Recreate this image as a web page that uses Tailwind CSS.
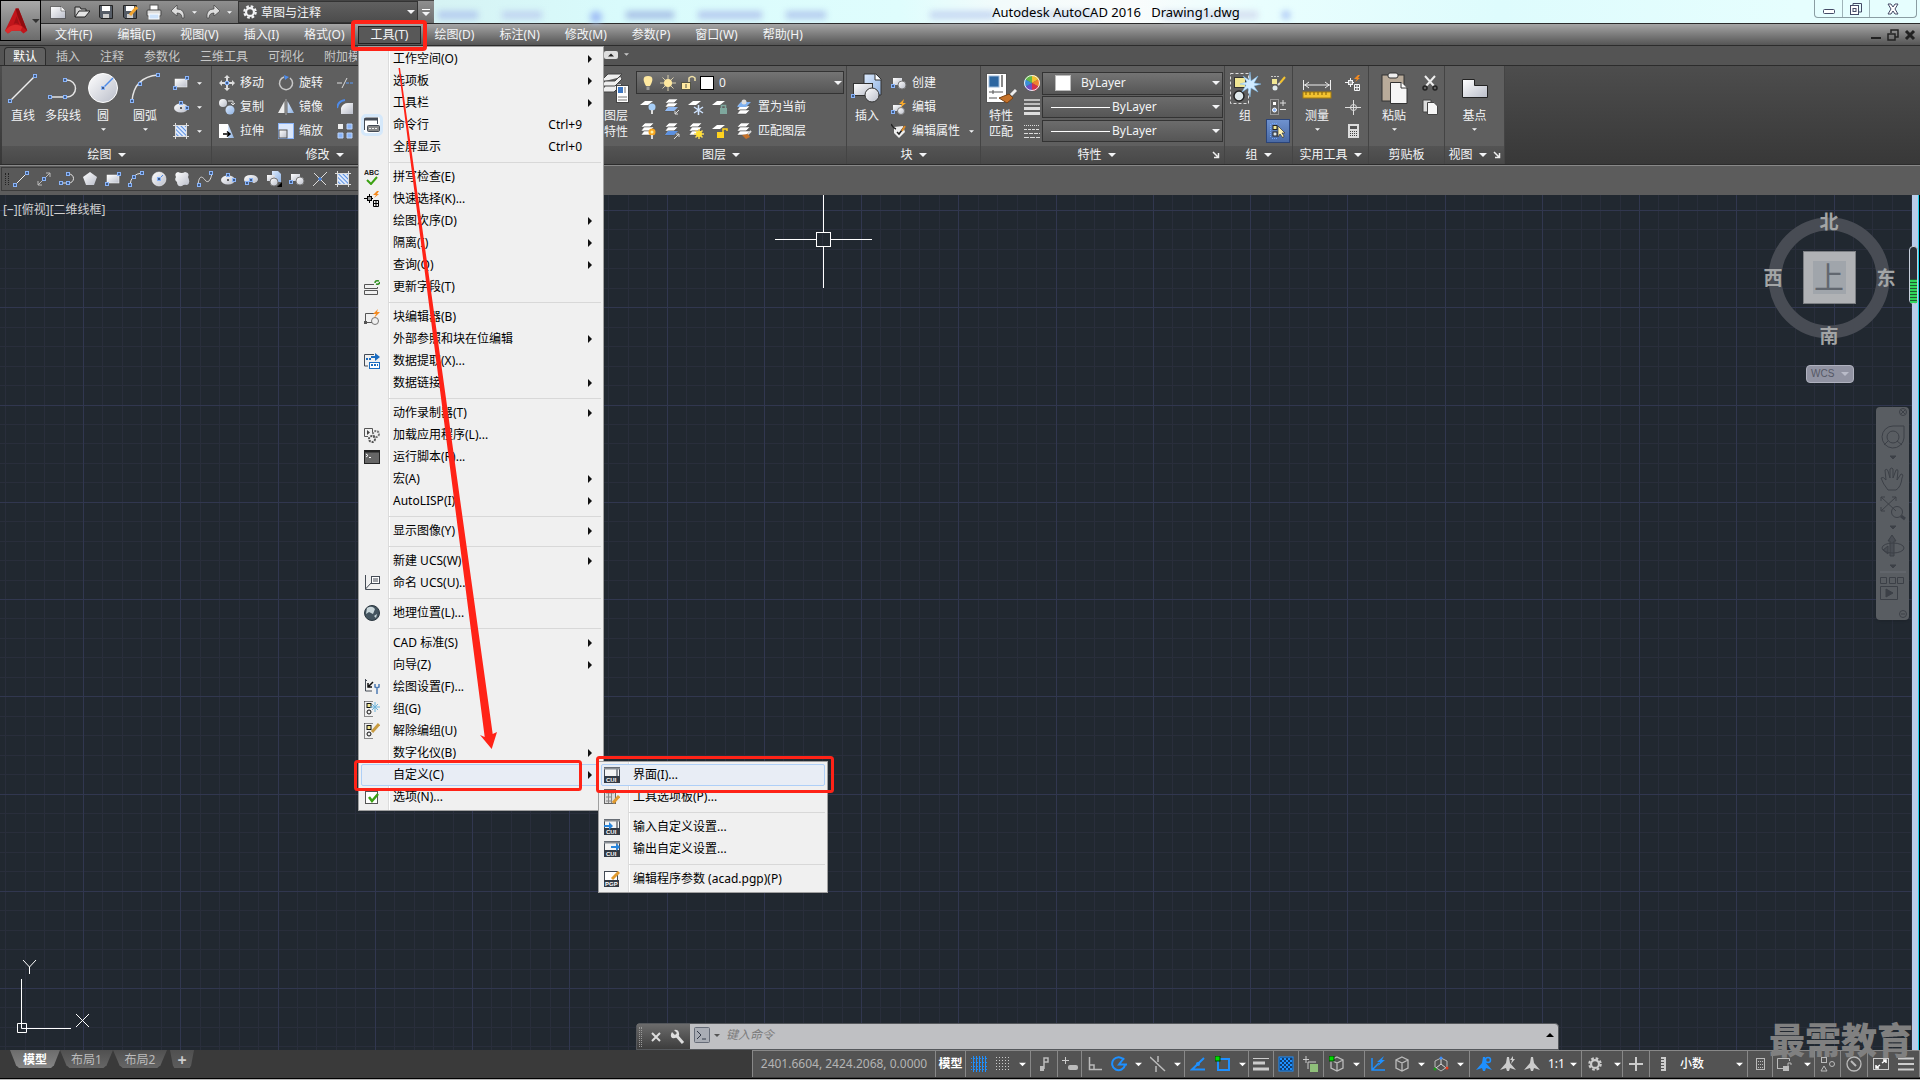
<!DOCTYPE html>
<html lang="zh-CN">
<head>
<meta charset="utf-8">
<title>Autodesk AutoCAD 2016 Drawing1.dwg</title>
<script src="https://cdn.jsdelivr.net/npm/@tailwindcss/browser@4"></script>
</head>
<body class="relative flex h-screen flex-col overflow-hidden bg-[#5c5c5c] font-['Noto_Sans','Noto_Sans_CJK_SC',sans-serif] text-xs leading-4 text-gray-100">

<!-- Icon library -->
<svg class="absolute size-0" aria-hidden="true">
  <defs>
    <linearGradient id="lg" x1="0" y1="0" x2="1" y2="1"><stop offset="0" stop-color="#fff"/><stop offset="1" stop-color="#b9bdc9"/></linearGradient>
    <linearGradient id="bl" x1="0" y1="0" x2="1" y2="1"><stop offset="0" stop-color="#dceafd"/><stop offset="1" stop-color="#8fb2e2"/></linearGradient>
    <pattern id="hatch" width="3" height="3" patternUnits="userSpaceOnUse" patternTransform="rotate(-45)"><rect width="3" height="3" fill="#dfeafc"/><path d="M0 0V3" stroke="#5b90e0" stroke-width="2"/></pattern>
    <g id="nd"><rect x="-1.5" y="-1.5" width="3" height="3" fill="#3e5c8c" stroke="#8ab4f8"/></g>
  </defs>
  <symbol id="caret" viewBox="0 0 8 4"><path d="M0 0H8L4 4Z" fill="currentColor"/></symbol>
  <symbol id="arrow" viewBox="0 0 4 8"><path d="M0 0V8L4 4Z" fill="#111"/></symbol>
  <symbol id="corner" viewBox="0 0 8 8"><path d="M1 1L6 6M6.500 2V6.500H2" stroke="#eee" stroke-width="1.500" fill="none"/></symbol>
  <!-- drawing tools, large -->
  <symbol id="Line" viewBox="0 0 32 32"><path d="M3 29L28 4" stroke="#eee" stroke-width="1.500"/><use href="#nd" x="3" y="29"/><use href="#nd" x="28" y="4"/></symbol>
  <symbol id="Pline" viewBox="0 0 32 32"><path d="M2 25H20a8.500 8.500 0 0 0 0-17H18" stroke="#e4e4e4" stroke-width="1.500" fill="none"/><use href="#nd" x="3" y="25"/><use href="#nd" x="18" y="25"/><use href="#nd" x="18" y="8"/></symbol>
  <symbol id="Circle" viewBox="0 0 32 32"><circle cx="16" cy="16" r="14.500" fill="url(#lg)" stroke="#fff"/><path d="M16 16L26 6" stroke="#4d8ae8" stroke-width="1.500"/><use href="#nd" x="16" y="16"/></symbol>
  <symbol id="Arc" viewBox="0 0 32 32"><path d="M3 29Q5 5 29 3" stroke="#e4e4e4" stroke-width="1.500" fill="none"/><use href="#nd" x="3" y="29"/><use href="#nd" x="11" y="12"/><use href="#nd" x="29" y="3"/></symbol>
  <!-- drawing tools, small -->
  <symbol id="line" viewBox="0 0 16 16"><path d="M2 14L14 2" stroke="#eee"/><use href="#nd" x="2" y="14"/><use href="#nd" x="14" y="2"/></symbol>
  <symbol id="pline" viewBox="0 0 16 16"><path d="M2 12H10a4.500 4.500 0 0 0 0-9H9" stroke="#e4e4e4" fill="none"/><use href="#nd" x="2" y="12"/><use href="#nd" x="9" y="12"/><use href="#nd" x="9" y="3"/></symbol>
  <symbol id="arc" viewBox="0 0 16 16"><path d="M2 14Q3 3 14 2" stroke="#e4e4e4" fill="none"/><use href="#nd" x="2" y="14"/><use href="#nd" x="6" y="6"/><use href="#nd" x="14" y="2"/></symbol>
  <symbol id="circle" viewBox="0 0 16 16"><circle cx="8" cy="8" r="7" fill="url(#lg)" stroke="#fff" stroke-width=".5"/><path d="M8 8L12 4" stroke="#4d8ae8"/><use href="#nd" x="8" y="8"/></symbol>
  <symbol id="rect" viewBox="0 0 16 16"><rect x="2" y="4" width="12" height="8" fill="url(#lg)" stroke="#fff" stroke-width=".5"/><use href="#nd" x="2" y="13"/><use href="#nd" x="14" y="3"/></symbol>
  <symbol id="ellipse" viewBox="0 0 16 16"><ellipse cx="8" cy="9" rx="7" ry="4.500" fill="url(#lg)"/><use href="#nd" x="8" y="4"/><use href="#nd" x="14" y="9"/><path d="M7 9h2M8 8v2" stroke="#333"/></symbol>
  <symbol id="earc" viewBox="0 0 16 16"><path d="M1 9Q1 4 8 4T15 9Q14 12 10 12L8 9L4 12Q1 11 1 9Z" fill="url(#lg)"/><use href="#nd" x="8" y="9"/><use href="#nd" x="4" y="12"/></symbol>
  <symbol id="hatchi" viewBox="0 0 16 16"><rect x="3" y="3" width="10" height="10" fill="url(#hatch)"/><path d="M0 2.500H16M0 13.500H16M2.500 0V16M13.500 0V16" stroke="#ddd"/></symbol>
  <symbol id="poly" viewBox="0 0 16 16"><path d="M8 1L15 6L12 14H4L1 6Z" fill="url(#lg)"/></symbol>
  <symbol id="cloud" viewBox="0 0 16 16"><path d="M4 1Q8 3 11 1Q16 2 14 6Q17 12 13 14Q10 13 8 15Q3 16 3 11Q0 9 2 6Q0 2 4 1Z" fill="url(#lg)"/></symbol>
  <symbol id="spline" viewBox="0 0 16 16"><path d="M1 14C2 4 5 5 8 9S14 9 15 2" stroke="#ddd" fill="none"/><use href="#nd" x="2" y="14"/><use href="#nd" x="14" y="2"/></symbol>
  <symbol id="block" viewBox="0 0 16 16"><rect x="2" y="3" width="9" height="7" fill="url(#lg)"/><circle cx="11" cy="10" r="4" fill="url(#lg)" stroke="#777"/><use href="#nd" x="2" y="11"/></symbol>
  <symbol id="insblk" viewBox="0 0 16 16"><path d="M6 0H12L15 3V11H6Z" fill="url(#bl)"/><rect x="1" y="4" width="8" height="6" fill="url(#lg)"/><circle cx="8" cy="11" r="4" fill="url(#lg)" stroke="#777"/><path d="M16 11V16H11Z"/></symbol>
  <symbol id="ray" viewBox="0 0 16 16"><path d="M1 15L15 1M2 2L14 14" stroke="#ddd"/><path d="M7 9L9 7" stroke="#4d8ae8" stroke-width="3"/></symbol>
  <symbol id="xline" viewBox="0 0 16 16"><path d="M2 14L14 2M10 2H14V6M2 10V14H6" stroke="#bbb" fill="none"/><use href="#nd" x="8" y="8"/></symbol>
  <!-- modify -->
  <symbol id="move" viewBox="0 0 16 16"><path d="M8 0l3 3H9v3H7V3H5ZM8 16l3-3H9v-3H7v3H5ZM0 8l3-3v2h3v2H3v2ZM16 8l-3-3v2h-3v2h3v2Z" fill="#ddd"/><use href="#nd" x="8" y="8"/></symbol>
  <symbol id="copy" viewBox="0 0 16 16"><circle cx="4" cy="4" r="4" fill="url(#lg)"/><circle cx="11" cy="11" r="4.500" fill="url(#bl)"/><path d="M9 2H14V5M12 4L14 6L16 4" stroke="#ddd" fill="none"/></symbol>
  <symbol id="stretch" viewBox="0 0 16 16"><rect x="0" y="1" width="9" height="14" fill="#fff"/><path d="M9 1L15 15H9Z" fill="url(#bl)"/><path d="M4 11H10M8 8.500L11 11L8 13.500" stroke="#000" stroke-width="1.500" fill="none"/></symbol>
  <symbol id="rotate" viewBox="0 0 16 16"><path d="M6 2A6.500 6.500 0 1 0 12 3" stroke="#c8c8c8" stroke-width="1.500" fill="none"/><path d="M6 0L11 2L7 5Z" fill="#4d8ae8"/></symbol>
  <symbol id="mirror" viewBox="0 0 16 16"><path d="M6.500 2V14H0Z" fill="#eee"/><path d="M9.500 2V14H16Z" fill="url(#bl)"/><path d="M8 0V16" stroke="#aaa"/></symbol>
  <symbol id="scale" viewBox="0 0 16 16"><rect x=".5" y=".5" width="15" height="15" fill="#dbe7fb" stroke="#8ab4f8"/><rect x="1" y="7" width="8" height="8" fill="url(#lg)" stroke="#555"/></symbol>
  <symbol id="trim" viewBox="0 0 16 16"><path d="M0 8H5M5 13L10 3" stroke="#ddd"/><path d="M9 8H16" stroke="#5a9bf8" stroke-dasharray="3 1"/></symbol>
  <symbol id="fillet" viewBox="0 0 16 16"><path d="M4 15V9Q6 4 11 4H16V15Z" fill="url(#lg)"/><path d="M0 9Q1 2 8 1" stroke="#4d8ae8" stroke-width="2" fill="none"/></symbol>
  <symbol id="array" viewBox="0 0 16 16"><rect x="1" y="1" width="5" height="5" fill="#eee"/><path d="M10 1h5v5h-5ZM1 10h5v5H1ZM10 10h5v5h-5Z" fill="#8ab4f8" stroke="#bcd4fa"/></symbol>
  <!-- layers -->
  <symbol id="LayerProp" viewBox="0 0 32 32"><path d="M8 2H22L15 9H1ZM5 9L1 14H15L22 7L21 5M5 14L1 20H14L22 12" fill="#eee" stroke="#444"/><rect x="16.500" y="13.500" width="12" height="17" fill="#fff" stroke="#444"/><rect x="18" y="15" width="5" height="6" fill="#3d76c2"/><path d="M25 15V21M18 25H27M18 28H27" stroke="#777"/></symbol>
  <symbol id="lay" viewBox="0 0 16 16"><path d="M5 0H14L10 4H1Z" fill="#fff" stroke="#444" stroke-width=".5"/><path d="M4 4H14L10 8H1Z" fill="#fff" stroke="#444" stroke-width=".5"/><path d="M4 8H14L10 12H1Z" fill="#fff" stroke="#444" stroke-width=".5"/></symbol>
  <symbol id="lay1" viewBox="0 0 16 16"><path d="M5 2H13L8 6H0Z" fill="#fff"/></symbol>
  <symbol id="layoff" viewBox="0 0 16 16"><use href="#lay1"/><circle cx="12" cy="8" r="3.500" fill="#a6cef8"/><path d="M12 11V15" stroke="#ddd" stroke-width="2"/></symbol>
  <symbol id="layon" viewBox="0 0 16 16"><use href="#lay"/><circle cx="12" cy="9" r="3.500" fill="#f7a520"/><circle cx="12" cy="9" r="1.500" fill="#fff3a0"/><path d="M12 12V16" stroke="#ddd" stroke-width="2"/></symbol>
  <symbol id="layiso" viewBox="0 0 16 16"><use href="#lay"/><path d="M4 8H14L10 12H1Z" fill="#8fb8f2"/><path d="M15 11L11 15M11 12V15H14" stroke="#ddd" fill="none"/></symbol>
  <symbol id="layuniso" viewBox="0 0 16 16"><use href="#lay"/><path d="M4 8H14L10 12H1Z" fill="#5b90e0"/><path d="M10 16L15 11M12 11H15V14" stroke="#ddd" fill="none"/></symbol>
  <symbol id="layfrz" viewBox="0 0 16 16"><use href="#lay1"/><path d="M10.500 6V16M6 8L15 14M6 14L15 8" stroke="#cfe4ff" stroke-width="1.500"/></symbol>
  <symbol id="laythaw" viewBox="0 0 16 16"><use href="#lay"/><path d="M11 6V16M6 11H16M7.500 7.500L14.500 14.500M7.500 14.500L14.500 7.500" stroke="#f9d85a" stroke-width="1.500"/><circle cx="11" cy="11" r="3" fill="#ffe030"/></symbol>
  <symbol id="laylock" viewBox="0 0 16 16"><use href="#lay1"/><rect x="8" y="9" width="7" height="6" fill="#7ea79d"/><path d="M9.500 9V6.500H13.500V9" stroke="#7ea79d" stroke-width="1.500" fill="none"/></symbol>
  <symbol id="layunlock" viewBox="0 0 16 16"><use href="#lay1"/><rect x="5" y="9" width="7" height="6" fill="#ffd21e"/><path d="M11 9V6H15V8" stroke="#ffd21e" stroke-width="1.500" fill="none"/></symbol>
  <symbol id="laycur" viewBox="0 0 16 16"><use href="#lay" y="3"/><path d="M5 3H15L10 8H1Z" fill="#7eb0f0"/><circle cx="8" cy="3" r="2.500" fill="#ddd"/></symbol>
  <symbol id="laymatch" viewBox="0 0 16 16"><use href="#lay"/><path d="M15 8L11 12" stroke="#ddd" stroke-width="2"/><path d="M6 12L12 11L14 14L10 16Z" fill="#c5722a"/></symbol>
  <symbol id="bulb" viewBox="0 0 16 16"><path d="M8 1C2 1 3 6 6 11H10C13 6 14 1 8 1Z" fill="#ffe9a0"/><path d="M6.500 11.500H9.500V15H6.500Z" fill="#999"/></symbol>
  <symbol id="sun" viewBox="0 0 16 16"><path d="M8 0V16M0 8H16M2.500 2.500L13.500 13.500M2.500 13.500L13.500 2.500" stroke="#d9cfae"/><circle cx="8" cy="8" r="4" fill="#ffe9a0"/></symbol>
  <symbol id="unlock" viewBox="0 0 16 16"><rect x="1.500" y="7.500" width="9" height="7" fill="#ffe9a0" stroke="#554"/><path d="M9 7V3Q12 0 15 3V6" stroke="#f1e2a8" stroke-width="1.500" fill="none"/><path d="M6 9V13" stroke="#554"/></symbol>
  <!-- block and properties -->
  <symbol id="Insert" viewBox="0 0 32 32"><path d="M13 2H25L30 7V23H13Z" fill="url(#bl)" stroke="#333"/><path d="M24 2V8H30" fill="#fff" stroke="#333"/><rect x="2.500" y="11.500" width="19" height="12" fill="url(#lg)" stroke="#333"/><circle cx="21" cy="23" r="7" fill="url(#lg)" stroke="#333"/><use href="#nd" x="2" y="24"/></symbol>
  <symbol id="blkedit" viewBox="0 0 16 16"><rect x="2" y="6" width="9" height="6" fill="url(#lg)"/><circle cx="10" cy="12" r="3.500" fill="url(#lg)" stroke="#777"/><path d="M13 0L8 5H11L9 9L15 4H12Z" fill="#f9a92b"/><use href="#nd" x="2" y="13"/></symbol>
  <symbol id="attr" viewBox="0 0 16 16"><path d="M3 4L12 3L14 9L8 15L3 10Z" fill="#eee"/><path d="M0 1Q2 5 5 6M6 9L8 11L14 3" stroke="#222" stroke-width="1.500" fill="none"/><path d="M14 3L11 8" stroke="#d98b2a" stroke-width="2"/></symbol>
  <symbol id="Match" viewBox="0 0 32 32"><rect x="1.500" y="1.500" width="20" height="29" fill="#fff" stroke="#555"/><rect x="4" y="4" width="10" height="11" fill="#2d66a0" stroke="#9bb8d8"/><path d="M17 3V15" stroke="#888" stroke-width="2"/><path d="M4 20H18M4 26H12M8 18V22" stroke="#555"/><path d="M31 18L26 23" stroke="#eee" stroke-width="3"/><path d="M14 26L24 22L28 26L22 31Z" fill="#c5722a" stroke="#7a4314"/></symbol>
  <symbol id="wheel" viewBox="0 0 16 16"><path d="M8 8V0A8 8 0 0 1 15 4Z" fill="#f2c230"/><path d="M8 8L15 4A8 8 0 0 1 15 12Z" fill="#f08030"/><path d="M8 8L15 12A8 8 0 0 1 8 16Z" fill="#d6304a"/><path d="M8 8V16A8 8 0 0 1 1 12Z" fill="#6a50c8"/><path d="M8 8L1 12A8 8 0 0 1 1 4Z" fill="#3a8ed8"/><path d="M8 8L1 4A8 8 0 0 1 8 0Z" fill="#62b848"/><circle cx="8" cy="8" r="7.500" fill="none" stroke="#eee"/></symbol>
  <symbol id="lw" viewBox="0 0 16 16"><path d="M0 1h16M0 5h16" stroke="#ddd" stroke-width="1.500"/><path d="M0 9.500H16" stroke="#ddd" stroke-width="3"/><path d="M0 14.500H16" stroke="#ddd" stroke-width="3"/></symbol>
  <symbol id="lt" viewBox="0 0 16 16"><path d="M0 2.500H16" stroke="#ddd" stroke-dasharray="1 1"/><path d="M0 6.500H16" stroke="#ddd" stroke-dasharray="3 1"/><path d="M0 10.500H16" stroke="#ddd" stroke-dasharray="4 1"/><path d="M0 14.500H16" stroke="#ddd" stroke-dasharray="5 1"/></symbol>
  <!-- groups, utilities, clipboard, view -->
  <symbol id="Group" viewBox="0 0 32 32"><rect x="1.500" y="1.500" width="18" height="30" fill="none" stroke="#ddd" stroke-dasharray="3 2"/><rect x="5.500" y="5.500" width="11" height="10" fill="#f1e794" stroke="#333"/><circle cx="10" cy="24" r="5" fill="#dfe9ec" stroke="#222" stroke-width="1.500"/><path d="M21 0L22 9L29 4L25 11L32 12L25 14L29 20L22 16L21 25L19 16L13 20L17 13L11 12L18 10L14 4L20 8Z" fill="#cfeaff" stroke="#7cbcf0" stroke-width=".5"/></symbol>
  <symbol id="ungroup" viewBox="0 0 16 16"><path d="M1 1.500H9" stroke="#ccc" stroke-dasharray="2 1"/><rect x="2" y="4" width="5" height="5" fill="#f1e794"/><circle cx="5" cy="13" r="2.500" fill="#dfe9ec"/><path d="M15 2L10 8" stroke="#f2c230" stroke-width="2"/><path d="M10 8L8 10" stroke="#ddd" stroke-width="2"/></symbol>
  <symbol id="grpedit" viewBox="0 0 16 16"><rect x=".5" y=".5" width="8" height="15" fill="none" stroke="#ccc" stroke-dasharray="1 1"/><rect x="3" y="3" width="3" height="3" fill="#fff"/><circle cx="4.500" cy="11" r="2" fill="#8ab4f8" stroke="#fff"/><path d="M10 4H16M13 1V7M10 10.500H16" stroke="#ddd"/></symbol>
  <symbol id="grpsel" viewBox="0 0 16 16"><path d="M.5 1V15M2 15.500H8M2 .5H8" stroke="#6fa8ff" stroke-dasharray="1 1"/><rect x="3" y="2.500" width="4" height="4" fill="#f1e794" stroke="#222"/><rect x="3" y="9" width="4" height="4" fill="#dce8f0" stroke="#222"/><path d="M8 3V14L10 11L13 15L14 13L12 10H15Z" fill="#fff3b0" stroke="#333" stroke-width=".7"/></symbol>
  <symbol id="Measure" viewBox="0 0 32 32"><path d="M2.500 8V18M29.500 8V18M3 13H29M8 10L4 13L8 16M24 10L28 13L24 16" stroke="#eee" fill="none"/><rect x="2" y="20" width="28" height="6" fill="#f2c230" stroke="#a67c10"/><path d="M5 20v3M9 20v3M13 20v3M17 20v3M21 20v3M25 20v3" stroke="#7c5a06"/></symbol>
  <symbol id="qsel" viewBox="0 0 16 16"><path d="M0 7.500H9M5.500 3V12" stroke="currentColor"/><rect x="3.500" y="5.500" width="4" height="4" fill="#999" stroke="currentColor"/><path d="M13 0L9 4H12L10 7L15 3H13L15 0Z" fill="#f58a1f"/><path d="M9.500 9.500H14.500V15.500H9.500ZM9 12.500H15M12 9V16" stroke="currentColor" fill="none"/></symbol>
  <symbol id="point" viewBox="0 0 16 16"><path d="M0 8.500H16M8.500 1V16" stroke="#ddd"/><circle cx="8.500" cy="8.500" r="3" stroke="#ddd" fill="none"/></symbol>
  <symbol id="calc" viewBox="0 0 16 16"><rect x="3" y="1" width="11" height="14" fill="#ddd"/><rect x="5" y="3" width="7" height="3" fill="#555"/><path d="M5 8.500H12M5 10.500H12M5 12.500H12" stroke="#444" stroke-dasharray="1 1"/></symbol>
  <symbol id="Paste" viewBox="0 0 32 32"><rect x="4" y="3" width="22" height="26" fill="#b9ab9a" stroke="#333"/><rect x="10" y="1" width="10" height="5" rx="2" fill="#eee" stroke="#333"/><path d="M12.500 10.500H23L29 16V31.500H12.500Z" fill="#f6f6f6" stroke="#333"/><path d="M23 10V16H29" fill="#fff" stroke="#333"/></symbol>
  <symbol id="cut" viewBox="0 0 16 16"><path d="M3 1L12 11M13 1L4 11" stroke="#eee" stroke-width="2"/><circle cx="3" cy="13" r="2" fill="none" stroke="#222" stroke-width="1.500"/><circle cx="13" cy="13" r="2" fill="none" stroke="#222" stroke-width="1.500"/></symbol>
  <symbol id="copyclip" viewBox="0 0 16 16"><path d="M1 1H9V13H1Z" fill="#ddd" stroke="#444"/><path d="M5.500 3.500H12L15.500 7V15.500H5.500Z" fill="#f6f6f6" stroke="#444"/></symbol>
  <symbol id="Base" viewBox="0 0 32 32"><path d="M3.500 7.500H15.500V13.500H28.500V25.500H3.500Z" fill="url(#lg)" stroke="#222"/></symbol>
  <!-- quick access -->
  <symbol id="new" viewBox="0 0 16 16"><path d="M.5 2.500H11L15.500 7V14.500H.5Z" fill="url(#lg)" stroke="#333" stroke-width=".6"/><path d="M11 2.500V7H15.500" fill="#fff" stroke="#555" stroke-width=".6"/></symbol>
  <symbol id="open" viewBox="0 0 16 16"><path d="M1 13V3H6L7 5H12V7" fill="#ccc" stroke="#222"/><path d="M1 13L5 7H16L11 13Z" fill="#e4e4e4" stroke="#222"/></symbol>
  <symbol id="save" viewBox="0 0 16 16"><path d="M1.500 1.500H14.500V14.500H3L1.500 13Z" fill="#555c66" stroke="#222"/><rect x="4" y="2" width="8" height="5" fill="#fff"/><rect x="5" y="10" width="6" height="4" fill="#ccc"/></symbol>
  <symbol id="saveas" viewBox="0 0 16 16"><use href="#save"/><path d="M15 3L8 11" stroke="#f2a530" stroke-width="3"/></symbol>
  <symbol id="print" viewBox="0 0 16 16"><rect x="4" y="1" width="8" height="6" fill="#fff" stroke="#555"/><rect x="1" y="6" width="14" height="6" rx="1" fill="#ddd" stroke="#444"/><rect x="3" y="10" width="10" height="5" fill="#cde2fa" stroke="#fff"/></symbol>
  <symbol id="undo" viewBox="0 0 16 16"><path d="M1 7L7 1V5Q15 5 14 14H12Q12 9 7 9V12Z" fill="#ddd" stroke="#333" stroke-width=".6"/></symbol>
  <symbol id="gear" viewBox="0 0 16 16"><circle cx="8" cy="8" r="6.500" fill="none" stroke="currentColor" stroke-width="2.500" stroke-dasharray="3 2.100"/><circle cx="8" cy="8" r="4.500" fill="none" stroke="currentColor" stroke-width="2.500"/></symbol>
  <!-- menu icons -->
  <symbol id="mcmd" viewBox="0 0 16 16"><path d="M.5 13V1.500H13.500V7" fill="#fff" stroke="#444b55"/><path d="M0 2H14" stroke="#444b55" stroke-width="3"/><rect x="3.500" y="8.500" width="12" height="6" rx="1" fill="#888" stroke="#444b55"/><path d="M5 11.500h9" stroke="#eee" stroke-dasharray="2 1"/></symbol>
  <symbol id="mspell" viewBox="0 0 16 16"><text x="0" y="6" font-size="7" font-family="Liberation Sans" font-weight="bold" fill="#222">ABC</text><path d="M3 11L7 15L13 8" stroke="#3ba112" stroke-width="2" fill="none"/></symbol>
  <symbol id="mfield" viewBox="0 0 16 16"><path d="M.5 5.500H10M.5 5.500V9.500H13.500V8M.5 11.500H13.500V15.500H.5Z" fill="none" stroke="#555"/><path d="M11 4Q11 1 15 2M16 3Q15 6 12 5" stroke="#2f8f1f" stroke-width="1.500" fill="none"/></symbol>
  <symbol id="mblk" viewBox="0 0 16 16"><path d="M1.500 13V4.500H10M3 13.500H8" stroke="#555" fill="none"/><circle cx="11" cy="12" r="3.500" fill="none" stroke="#777"/><rect x="0" y="12" width="3" height="3" fill="#555"/><path d="M14 0L9 5H12L10 9L16 3H13Z" fill="#f58a1f"/></symbol>
  <symbol id="mdata" viewBox="0 0 16 16"><path d="M.5 13V1.500H10M.5 13H4" stroke="#444b55" fill="none"/><rect x="5.500" y="9.500" width="10" height="6" fill="#fff" stroke="#1b6cc0"/><path d="M7 12h7M2 6h6" stroke="#1b6cc0" stroke-width="2" stroke-dasharray="2 1"/><path d="M7 3H11V0L16 4L11 8V5H7Z" fill="#1b6cc0"/></symbol>
  <symbol id="mapp" viewBox="0 0 16 16"><path d="M.5 1.500H8.500V6M.5 1.500V9.500H4" stroke="#555" fill="none"/><path d="M3 3V8L6 5.500Z" fill="#444"/><circle cx="12" cy="7" r="3" fill="none" stroke="#777" stroke-width="2" stroke-dasharray="2 1"/><circle cx="8" cy="12" r="3" fill="none" stroke="#555" stroke-width="2" stroke-dasharray="2 1"/></symbol>
  <symbol id="mscript" viewBox="0 0 16 16"><rect x=".5" y="1.500" width="15" height="13" fill="#666" stroke="#222"/><path d="M0 2.500H16" stroke="#222" stroke-width="2"/><path d="M2 5L4 6.500L2 8M5 8.500H7" stroke="#fff" fill="none"/></symbol>
  <symbol id="mucs" viewBox="0 0 16 16"><path d="M1.500 0V14.500H16M1.500 14L8 7" stroke="#444b55" fill="none"/><rect x="7.500" y="1.500" width="8" height="7" fill="#fff" stroke="#444b55"/><path d="M9 4h5M9 6h5" stroke="#444b55"/></symbol>
  <symbol id="mgeo" viewBox="0 0 16 16"><circle cx="8" cy="8" r="7.500" fill="#44545f" stroke="#2c3840"/><path d="M3 3Q8 0 11 4L9 9L5 7L2 9ZM10 11L13 9L12 13Z" fill="#c9d6da"/></symbol>
  <symbol id="mdraft" viewBox="0 0 16 16"><path d="M1.500 0V12H8M1 1.500H3" stroke="#444b55" fill="none"/><path d="M9 3L4 8M4 4V8H8" stroke="#111" stroke-width="1.500" fill="none"/><path d="M11 5V8L13 9L15 8V5M13 9V15" stroke="#4d7bb4" stroke-width="1.500" fill="none"/></symbol>
  <symbol id="mgrp" viewBox="0 0 16 16"><path d="M.5 .5H9M.5 .5V15.500H9" fill="none" stroke="#222" stroke-dasharray="1 1"/><rect x="3" y="2.500" width="4" height="4" fill="#f1e794" stroke="#111"/><circle cx="5" cy="11" r="2" fill="#eee" stroke="#111"/><path d="M11 1V11M6 6H16M8 3L14 9M8 9L14 3" stroke="#6db4dc"/></symbol>
  <symbol id="mungrp" viewBox="0 0 16 16"><path d="M.5 .5H9M.5 .5V15.500H9" fill="none" stroke="#222" stroke-dasharray="1 1"/><rect x="3" y="2.500" width="4" height="4" fill="#f1e794" stroke="#111"/><circle cx="5" cy="11" r="2" fill="#eee" stroke="#111"/><path d="M15 1L8 9" stroke="#c89b40" stroke-width="3"/></symbol>
  <symbol id="mopt" viewBox="0 0 16 16"><rect x="1.500" y="2.500" width="12" height="12" fill="#fff" stroke="#555"/><path d="M5 8L8 12L14 5" stroke="#3ba112" stroke-width="2.500" fill="none"/></symbol>
  <symbol id="mcui" viewBox="0 0 16 16"><rect x=".5" y=".5" width="15" height="9" fill="#f4f4f4" stroke="#444b55"/><path d="M0 1.500H16M13 2V9" stroke="#8a8f96" stroke-width="2"/><rect y="9" width="16" height="7" fill="#333a44"/><text x="2" y="15" font-size="6" font-family="Liberation Sans" font-weight="bold" fill="#fff">CUI</text></symbol>
  <symbol id="mcuiin" viewBox="0 0 16 16"><use href="#mcui"/><path d="M0 6H5V3L9 7L5 11V8H0Z" fill="#2a86dc"/></symbol>
  <symbol id="mcuiout" viewBox="0 0 16 16"><use href="#mcui"/><path d="M7 5H12V2L16 6L12 10V7H7Z" fill="#2a86dc"/></symbol>
  <symbol id="mpal" viewBox="0 0 16 16"><rect x=".5" y=".5" width="11" height="14" fill="#ddd" stroke="#666"/><path d="M2 4H10M2 8H8M2 12H7M4.500 1V14M7.500 1V14" stroke="#888"/><path d="M15 7L9 14" stroke="#e09a2e" stroke-width="3"/></symbol>
  <symbol id="mpgp" viewBox="0 0 16 16"><rect x=".5" y=".5" width="13" height="10" fill="#fff" stroke="#444b55"/><rect y="9" width="15" height="7" fill="#333a44"/><text x="1" y="15" font-size="6" font-family="Liberation Sans" font-weight="bold" fill="#fff">PGP</text><path d="M15 1L8 8" stroke="#e09a2e" stroke-width="3"/></symbol>
  <!-- status bar -->
  <symbol id="sgrid" viewBox="0 0 16 16"><path d="M2.500 0V16M5.500 0V16M8.500 0V16M11.500 0V16M14.500 0V16" stroke="#1e90ff"/><path d="M0 2.500H16M0 6.500H16M0 10.500H16M0 13.500H16" stroke="#1e90ff" stroke-dasharray="1 2"/></symbol>
  <symbol id="sdots" viewBox="0 0 16 16"><path d="M1 1.500H16M1 4.500H16M1 7.500H16M1 10.500H16M1 13.500H16" stroke="#ccc" stroke-dasharray="1 2"/></symbol>
  <symbol id="sinfer" viewBox="0 0 16 16"><path d="M8 13V2H12V6H8" stroke="#bbb" stroke-width="1.500" fill="none"/><rect x="4" y="10" width="4" height="5" fill="#bbb"/></symbol>
  <symbol id="sdyn" viewBox="0 0 16 16"><path d="M0 4.500H7M3.500 1V8" stroke="#ccc"/><rect x="6" y="9" width="10" height="5" rx="2" fill="#bbb"/></symbol>
  <symbol id="sortho" viewBox="0 0 16 16"><path d="M2.500 1V13.500H15M3 9H7V13" stroke="#bbb" stroke-width="1.500" fill="none"/></symbol>
  <symbol id="spolar" viewBox="0 0 16 16"><path d="M13 4A6.500 6.500 0 1 0 14 9M16 8.500H8L13 2" stroke="#1e90ff" stroke-width="2" fill="none"/></symbol>
  <symbol id="siso" viewBox="0 0 16 16"><path d="M0 1L15 15M8 0V6M6 10V16" stroke="#bbb" stroke-width="1.500"/></symbol>
  <symbol id="strack" viewBox="0 0 16 16"><path d="M14 2L2 13.500H15" stroke="#1e90ff" stroke-width="2" fill="none"/><circle cx="8" cy="8" r="2" fill="#1e90ff"/></symbol>
  <symbol id="sosnap" viewBox="0 0 16 16"><rect x="3" y="3" width="11" height="11" stroke="#1e90ff" stroke-width="2" fill="none"/><rect x="0" y="0" width="5" height="5" fill="#0d0" stroke="#040"/></symbol>
  <symbol id="slw" viewBox="0 0 16 16"><path d="M0 2.500H16" stroke="#ccc" stroke-width="1"/><path d="M0 7H12M0 13H16" stroke="#ccc" stroke-width="3"/></symbol>
  <symbol id="strans" viewBox="0 0 16 16"><rect x="1" y="1" width="14" height="14" fill="#123c6c" stroke="#1e90ff"/><path d="M2 3H14M2 7H14M2 11H14" stroke="#1e90ff" stroke-width="2" stroke-dasharray="2 2"/><path d="M4 5H14M4 9H14M4 13H14" stroke="#1e90ff" stroke-width="2" stroke-dasharray="2 2"/></symbol>
  <symbol id="scyc" viewBox="0 0 16 16"><path d="M0 3.500H6M3 0V7M5 13V6H13" stroke="#ccc" fill="none"/><rect x="7" y="8" width="8" height="8" fill="#8fbf7a"/></symbol>
  <symbol id="scube" viewBox="0 0 16 16"><path d="M8 1L14 4V12L8 15L2 12V4ZM2 4L8 7L14 4M8 7V15" stroke="#bbb" stroke-width="1.300" fill="none"/></symbol>
  <symbol id="s3d" viewBox="0 0 16 16"><use href="#scube"/><rect x="0" y="0" width="5" height="5" fill="#0d0" stroke="#040"/></symbol>
  <symbol id="sucs" viewBox="0 0 16 16"><path d="M2 2V14H15M2 14L9 7" stroke="#1e90ff" stroke-width="1.500" fill="none"/><path d="M14 0L7 6H10L8 10L15 4H12Z" fill="#1e90ff"/></symbol>
  <symbol id="sgiz" viewBox="0 0 16 16"><path d="M8 2L14 5V11L8 15L2 11V5Z" stroke="#bbb" fill="none"/><path d="M8 8V3M8 8L3 12M8 8L13 12" stroke="#ddd"/><circle cx="8" cy="2" r="1.500" fill="#3a8dff"/><circle cx="2" cy="13" r="1.500" fill="#1a9a1a"/><circle cx="14" cy="12" r="1.500" fill="#e23a1e"/></symbol>
  <symbol id="sann" viewBox="0 0 16 16"><path d="M7 1H9L10 7L16 14L10 12L9 15H7L6 12L0 14L6 7Z" fill="currentColor"/></symbol>
  <symbol id="sannv" viewBox="0 0 16 16"><use href="#sann"/><circle cx="12" cy="4" r="2.500" fill="#535353" stroke="currentColor" stroke-width="1.500"/></symbol>
  <symbol id="sanna" viewBox="0 0 16 16"><use href="#sann"/><path d="M13 0L10 4H12L11 8L15 3H13Z" fill="currentColor"/></symbol>
  <symbol id="splus" viewBox="0 0 16 16"><path d="M1 8H15M8 1V15" stroke="#ccc" stroke-width="2"/></symbol>
  <symbol id="sruler" viewBox="0 0 16 16"><path d="M6 1H11V15H6Z" fill="#ccc"/><path d="M6 3.500h3M6 6.500h3M6 9.500h3M6 12.500h3" stroke="#555"/></symbol>
  <symbol id="sqp" viewBox="0 0 16 16"><rect x="4.500" y="2.500" width="8" height="11" fill="none" stroke="#bbb"/><path d="M6 5.500H11M6 8.500H11M6 11.500H11" stroke="#bbb" stroke-dasharray="1 1"/></symbol>
  <symbol id="slock" viewBox="0 0 16 16"><path d="M1.500 12V2.500H13.500V5M1 12.500H7" stroke="#bbb" fill="none"/><rect x="7" y="10" width="6" height="5" fill="#bbb"/><path d="M12 10V7H15V9" stroke="#bbb" fill="none"/></symbol>
  <symbol id="sisol" viewBox="0 0 16 16"><rect x="1.500" y="1.500" width="5" height="5" fill="none" stroke="#bbb"/><circle cx="12" cy="8" r="2.500" fill="none" stroke="#bbb"/><path d="M4 10L7 15H1Z" fill="none" stroke="#bbb"/></symbol>
  <symbol id="sperf" viewBox="0 0 16 16"><circle cx="8" cy="8" r="7" fill="none" stroke="#bbb" stroke-width="1.300"/><path d="M5 5L10 10" stroke="#bbb" stroke-width="2"/></symbol>
  <symbol id="sfull" viewBox="0 0 16 16"><rect x=".5" y="2.500" width="15" height="11" fill="none" stroke="#ccc"/><path d="M9 7L13 4M10 4H13V7M7 9L3 12M6 12H3V9" stroke="#fff" fill="none" stroke-width="1.500"/></symbol>
  <symbol id="smenu" viewBox="0 0 16 16"><path d="M0 2.500H16M0 8H16M0 13.500H16" stroke="#ccc" stroke-width="2"/></symbol>
</svg>

<!-- Title bar -->
<header class="relative shrink-0">
  <div class="flex h-6 items-stretch border-b border-[#2a2a2a] bg-[linear-gradient(90deg,#d6f3f4_0px,#d6f3f4_440px,#d9fbfc_620px,#dffdfd_900px,#f2fbfb_1000px,#fafcfc_1130px,#e9fefe_1260px,#defcfd_1500px,#e6fefe_1800px)] pl-[41px]">
    <div class="flex items-center border-t border-[#444] bg-linear-to-b from-[#8f8f8f] to-[#6d6d6d]">
      <div class="flex items-center gap-2 pr-[6px] pl-[9px] [&_svg]:block">
        <button aria-label="新建"><svg class="size-4"><use href="#new"/></svg></button>
        <button aria-label="打开"><svg class="size-4"><use href="#open"/></svg></button>
        <button aria-label="保存"><svg class="size-4"><use href="#save"/></svg></button>
        <button aria-label="另存为"><svg class="size-4"><use href="#saveas"/></svg></button>
        <button aria-label="打印"><svg class="size-4"><use href="#print"/></svg></button>
        <button aria-label="放弃" class="flex items-center gap-[6px]"><svg class="size-4"><use href="#undo"/></svg><svg class="h-[3px] w-[5px]"><use href="#caret"/></svg></button>
        <button aria-label="重做" class="flex items-center gap-[6px]"><svg class="size-4 -scale-x-100"><use href="#undo"/></svg><svg class="h-[3px] w-[5px]"><use href="#caret"/></svg></button>
      </div>
      <label class="flex h-[22px] w-[180px] items-center border border-[#333] bg-linear-to-b from-[#606060] to-[#4c4c4c] pr-[2px] pl-1">
        <svg class="size-[14px] shrink-0"><use href="#gear"/></svg>
        <select aria-label="工作空间" class="w-full appearance-none bg-transparent pt-px pl-1 outline-none"><option>草图与注释</option></select>
        <svg class="h-1 w-2 shrink-0"><use href="#caret"/></svg>
      </label>
      <button aria-label="自定义快速访问工具栏" class="flex w-4 flex-col items-center gap-[2px]"><span class="h-px w-2 bg-white"></span><svg class="h-1 w-2"><use href="#caret"/></svg></button>
    </div>
    <div class="relative flex flex-1 items-center justify-center pr-4">
      <div aria-hidden="true" class="absolute inset-x-0 bottom-0 flex h-3 gap-6 px-1 blur-[3px]"><i class="h-2 w-10 bg-[#b4cbee]"></i><i class="h-2 w-10 bg-[#c0d4f0]"></i><i class="ml-6 size-3 rounded-full bg-[#9fbdf5]"></i><i class="h-2 w-12 bg-[#a9c2e6]"></i><i class="h-2 w-16 bg-[#b5caee]"></i><i class="h-2 w-10 bg-[#b4cbee]"></i><i class="ml-20 h-2 w-16 bg-[#c6d8f2]"></i><i class="h-2 w-20 bg-[#d4dff0]"></i><i class="ml-10 h-2 w-24 bg-[#d4dff0]"></i><i class="size-2 rounded-full bg-[#a4c0f4]"></i></div>
      <h1 class="relative text-[13px] whitespace-pre text-black">Autodesk AutoCAD 2016   Drawing1.dwg</h1>
    </div>
    <div class="mr-[3px] flex h-[18px] divide-x divide-[#9fb3b8] rounded-b border border-t-0 border-[#8a9da2] text-[#444] [&_button]:flex [&_button]:items-center [&_button]:justify-center">
      <button aria-label="最小化" class="w-7"><svg class="h-4 w-3" viewBox="0 0 12 16"><rect x=".5" y="8.500" width="11" height="4" rx="1" fill="#fff" stroke="#444a66"/></svg></button>
      <button aria-label="还原" class="w-[27px]"><svg class="size-3" viewBox="0 0 12 12"><path d="M3 3V.5H11.500V9H9" fill="none" stroke="#444a66"/><rect x=".5" y="2.500" width="8" height="9" fill="#fff" stroke="#444a66"/><rect x="3" y="5.500" width="3" height="3" fill="none" stroke="#444a66"/></svg></button>
      <button aria-label="关闭" class="w-[46px]"><svg class="size-3" viewBox="0 0 12 12"><path d="M1 1H4L6 4L8 1H11L8 6L11 11H8L6 8L4 11H1L4 6Z" fill="#fff" stroke="#444a66"/></svg></button>
    </div>
  </div>

  <!-- Menu bar -->
  <nav class="flex h-[22px] items-center justify-between border-b border-[#2c2c2c] bg-linear-to-b from-[#a6a6a6] to-[#555] pl-[43px]">
    <ul class="flex gap-px [&_button]:block [&_button]:h-[18px] [&_button]:px-3">
      <li><button>文件(F)</button></li><li><button>编辑(E)</button></li><li><button>视图(V)</button></li><li><button>插入(I)</button></li><li><button>格式(O)</button></li>
      <li><button aria-expanded="true" class="border border-[#222] bg-[#585858]">工具(T)</button></li>
      <li><button>绘图(D)</button></li><li><button>标注(N)</button></li><li><button>修改(M)</button></li><li><button>参数(P)</button></li><li><button>窗口(W)</button></li><li><button>帮助(H)</button></li>
    </ul>
    <div class="flex gap-[5px] pr-1">
      <button aria-label="最小化图形"><svg class="size-3" viewBox="0 0 12 12"><path d="M1 9H11" stroke="#222" stroke-width="2"/></svg></button>
      <button aria-label="还原图形"><svg class="size-3" viewBox="0 0 12 12"><path d="M4 4V1H11V8H8M1 5H8V11H1Z" fill="none" stroke="#222" stroke-width="1.500"/></svg></button>
      <button aria-label="关闭图形"><svg class="size-3" viewBox="0 0 12 12"><path d="M2 2L10 10M10 2L2 10" stroke="#222" stroke-width="3"/></svg></button>
    </div>
  </nav>

  <button aria-label="应用程序菜单" class="absolute top-0 left-0 flex size-[41px] items-center gap-1 border border-black bg-linear-to-b from-[#a8a8a8] to-[#6c6c6c] pl-1">
    <svg class="h-7 w-6" viewBox="0 0 24 28"><path d="M11 1H14L23 24L19 27L16 24H7L3 27L0 24Z" fill="#c1151b"/><path d="M11 1L14 1L23 24L17 19L13 9Z" fill="#8f0c10"/><path d="M9 17L12 9L15 18Q12 15 9 17Z" fill="#a01015"/><path d="M0 24Q8 14 18 20L16 24H7L3 27Z" fill="#dc2b2b"/></svg>
    <svg class="h-1 w-2 text-[#333]"><use href="#caret"/></svg>
  </button>
</header>

<!-- Ribbon tabs -->
<div class="flex h-5 shrink-0 items-end border-b border-[#2c2c2c] bg-[#545454] pl-1 text-[#c8c8c8] [&_button]:h-[18px] [&_button]:px-[10px] [&_button]:pt-px">
  <button class="rounded-t-sm border border-b-0 border-[#2c2c2c] bg-[#606060] !px-2 !pt-0 text-white">默认</button>
  <button>插入</button><button>注释</button><button>参数化</button><button>三维工具</button><button>可视化</button><button class="w-[43px] overflow-hidden !pr-0 whitespace-nowrap">附加模</button>
  <div class="w-[247px]"></div>
  <button aria-label="最小化功能区" class="flex items-center gap-[6px] !px-0 pb-1"><svg class="h-2 w-[14px]" viewBox="0 0 14 8"><rect width="14" height="8" rx="2" fill="#ddd"/><path d="M4 5.500H10L7 2.500Z" fill="#222"/></svg><svg class="h-[3px] w-[5px]"><use href="#caret"/></svg></button>
</div>

<!-- Ribbon -->
<main class="flex h-[99px] shrink-0 border-b border-[#2c2c2c] bg-linear-to-b from-[#4d4d4d] to-[#383838] pl-[2px] [&>section]:flex [&>section]:shrink-0 [&>section]:flex-col [&>section]:border-r [&>section]:border-[#444] [&>section]:bg-[#5f5f5f] [&>section>div]:flex [&>section>div]:h-[80px] [&>section>div]:pt-[5px] [&_h2]:flex [&_h2]:h-[18px] [&_h2]:items-center [&_h2]:justify-center [&_h2]:gap-[6px] [&_h2]:bg-linear-to-b [&_h2]:from-[#545454] [&_h2]:to-[#484848]">
  <section class="w-[210px]">
    <div class="pl-px">
      <div class="flex [&>button]:flex [&>button]:w-10 [&>button]:flex-col [&>button]:items-center [&>button]:pt-px">
        <button><svg class="size-8"><use href="#Line"/></svg><span class="mt-1">直线</span></button>
        <button><svg class="size-8"><use href="#Pline"/></svg><span class="mt-1">多段线</span></button>
        <button><svg class="size-8"><use href="#Circle"/></svg><span class="mt-1">圆</span><svg class="mt-1 h-[3px] w-[5px]"><use href="#caret"/></svg></button>
        <button class="ml-[2px]"><svg class="size-8"><use href="#Arc"/></svg><span class="mt-1">圆弧</span><svg class="mt-1 h-[3px] w-[5px]"><use href="#caret"/></svg></button>
      </div>
      <div class="pl-2 [&>button]:flex [&>button]:h-6 [&>button]:items-center [&>button]:gap-2">
        <button aria-label="矩形"><svg class="size-4"><use href="#rect"/></svg><svg class="h-[3px] w-[5px]"><use href="#caret"/></svg></button>
        <button aria-label="椭圆"><svg class="size-4"><use href="#ellipse"/></svg><svg class="h-[3px] w-[5px]"><use href="#caret"/></svg></button>
        <button aria-label="图案填充"><svg class="size-4"><use href="#hatchi"/></svg><svg class="h-[3px] w-[5px]"><use href="#caret"/></svg></button>
      </div>
    </div>
    <h2>绘图<svg class="h-1 w-2"><use href="#caret"/></svg></h2>
  </section>
  <section class="w-[226px]">
    <div class="gap-[18px] pl-[7px] [&_button]:flex [&_button]:h-6 [&_button]:items-center [&_button]:gap-[5px]">
      <div class="w-[41px] whitespace-nowrap"><button><svg class="size-4"><use href="#move"/></svg>移动</button><button><svg class="size-4"><use href="#copy"/></svg>复制</button><button><svg class="size-4"><use href="#stretch"/></svg>拉伸</button></div>
      <div class="w-[41px] whitespace-nowrap"><button><svg class="size-4"><use href="#rotate"/></svg>旋转</button><button><svg class="size-4"><use href="#mirror"/></svg>镜像</button><button><svg class="size-4"><use href="#scale"/></svg>缩放</button></div>
      <div><button aria-label="修剪"><svg class="size-4"><use href="#trim"/></svg></button><button aria-label="圆角"><svg class="size-4"><use href="#fillet"/></svg></button><button aria-label="阵列"><svg class="size-4"><use href="#array"/></svg></button></div>
    </div>
    <h2>修改<svg class="h-1 w-2"><use href="#caret"/></svg></h2>
  </section>
  <section class="w-[158px]"><div></div><h2></h2></section>
  <section class="w-[251px]">
    <div class="pl-1">
      <button class="flex w-8 flex-col items-center pt-px"><svg class="size-8"><use href="#LayerProp"/></svg><span class="mt-1">图层<br>特性</span></button>
      <div class="flex-1 pr-[2px] pl-[4px]">
        <label class="flex h-[23px] items-center gap-1 border border-[#333] bg-linear-to-b from-[#747474] to-[#565656] pr-px pl-[3px]">
          <svg class="size-4 shrink-0"><use href="#bulb"/></svg><svg class="size-4 shrink-0"><use href="#sun"/></svg><svg class="size-4 shrink-0"><use href="#unlock"/></svg><i class="size-[14px] shrink-0 border border-black bg-white"></i>
          <select aria-label="图层" class="w-full appearance-none bg-transparent pl-px outline-none"><option>0</option></select><svg class="h-1 w-2 shrink-0"><use href="#caret"/></svg>
        </label>
        <div class="grid grid-cols-[repeat(5,24px)_1fr] pt-px pl-1 [&>button]:flex [&>button]:h-6 [&>button]:items-center">
          <button aria-label="关"><svg class="size-4"><use href="#layoff"/></svg></button><button aria-label="隔离"><svg class="size-4"><use href="#layiso"/></svg></button><button aria-label="冻结"><svg class="size-4"><use href="#layfrz"/></svg></button><button aria-label="锁定"><svg class="size-4"><use href="#laylock"/></svg></button><button class="col-span-2 gap-[6px]"><svg class="size-4"><use href="#laycur"/></svg>置为当前</button>
          <button aria-label="打开所有图层"><svg class="size-4"><use href="#layon"/></svg></button><button aria-label="取消隔离"><svg class="size-4"><use href="#layuniso"/></svg></button><button aria-label="解冻"><svg class="size-4"><use href="#laythaw"/></svg></button><button aria-label="解锁"><svg class="size-4"><use href="#layunlock"/></svg></button><button class="col-span-2 gap-[6px]"><svg class="size-4"><use href="#laymatch"/></svg>匹配图层</button>
        </div>
      </div>
    </div>
    <h2>图层<svg class="h-1 w-2"><use href="#caret"/></svg></h2>
  </section>
  <section class="w-[134px]">
    <div class="gap-2 pl-1 [&>div>button]:flex [&>div>button]:h-6 [&>div>button]:items-center [&>div>button]:gap-[5px]">
      <button class="flex w-8 flex-col items-center pt-px"><svg class="size-8"><use href="#Insert"/></svg><span class="mt-1">插入</span></button>
      <div><button><svg class="size-4"><use href="#block"/></svg>创建</button><button><svg class="size-4"><use href="#blkedit"/></svg>编辑</button><button><svg class="size-4"><use href="#attr"/></svg>编辑属性<svg class="ml-1 h-[3px] w-[5px]"><use href="#caret"/></svg></button></div>
    </div>
    <h2>块<svg class="h-1 w-2"><use href="#caret"/></svg></h2>
  </section>
  <section class="w-[244px]">
    <div class="pl-1">
      <button class="flex w-8 flex-col items-center pt-px"><svg class="size-8"><use href="#Match"/></svg><span class="mt-1">特性<br>匹配</span></button>
      <div class="flex-1 pr-px pl-[7px] [&>label]:flex [&>label]:h-6 [&>label]:items-center [&>label]:gap-[2px]">
        <label><svg class="size-4 shrink-0"><use href="#wheel"/></svg><span class="flex h-[23px] flex-1 items-center border border-[#333] bg-linear-to-b from-[#747474] to-[#565656] pr-[2px] pl-3"><i class="size-4 shrink-0 border border-[#bbb] bg-white"></i><select aria-label="对象颜色" class="w-full appearance-none bg-transparent pl-[10px] outline-none"><option>ByLayer</option></select><svg class="h-1 w-2 shrink-0"><use href="#caret"/></svg></span></label>
        <label><svg class="size-4 shrink-0"><use href="#lw"/></svg><span class="flex h-[22px] flex-1 items-center border border-[#333] bg-linear-to-b from-[#6c6c6c] to-[#565656] pr-[2px] pl-2"><i class="h-px w-[59px] shrink-0 bg-white"></i><select aria-label="线宽" class="w-full appearance-none bg-transparent pl-[2px] outline-none"><option>ByLayer</option></select><svg class="h-1 w-2 shrink-0"><use href="#caret"/></svg></span></label>
        <label><svg class="size-4 shrink-0"><use href="#lt"/></svg><span class="flex h-[22px] flex-1 items-center border border-[#333] bg-linear-to-b from-[#6c6c6c] to-[#565656] pr-[2px] pl-2"><i class="h-px w-[59px] shrink-0 bg-white"></i><select aria-label="线型" class="w-full appearance-none bg-transparent pl-[2px] outline-none"><option>ByLayer</option></select><svg class="h-1 w-2 shrink-0"><use href="#caret"/></svg></span></label>
      </div>
    </div>
    <h2 class="pr-1 pl-[6px]"><span class="flex flex-1 items-center justify-center gap-[6px]">特性<svg class="h-1 w-2"><use href="#caret"/></svg></span><svg class="size-2"><use href="#corner"/></svg></h2>
  </section>
  <section class="w-[68px]">
    <div class="gap-[5px] pl-1">
      <button class="flex w-8 flex-col items-center pt-px"><svg class="size-8"><use href="#Group"/></svg><span class="mt-1">组</span></button>
      <div class="[&>button]:flex [&>button]:h-6 [&>button]:w-6 [&>button]:items-center [&>button]:justify-center"><button aria-label="解除编组"><svg class="size-4"><use href="#ungroup"/></svg></button><button aria-label="组编辑"><svg class="size-4"><use href="#grpedit"/></svg></button><button aria-label="启用组选择" aria-pressed="true" class="border border-[#2b4478] bg-linear-to-b from-[#6f92cf] to-[#4a6aa5]"><svg class="size-4"><use href="#grpsel"/></svg></button></div>
    </div>
    <h2>组<svg class="h-1 w-2"><use href="#caret"/></svg></h2>
  </section>
  <section class="w-[76px]">
    <div class="gap-3 pl-2">
      <button class="flex w-8 flex-col items-center pt-px"><svg class="size-8"><use href="#Measure"/></svg><span class="mt-1">测量</span><svg class="mt-1 h-[3px] w-[5px]"><use href="#caret"/></svg></button>
      <div class="[&>button]:flex [&>button]:h-6 [&>button]:w-5 [&>button]:items-center"><button aria-label="快速选择"><svg class="size-4"><use href="#qsel"/></svg></button><button aria-label="点坐标"><svg class="size-4"><use href="#point"/></svg></button><button aria-label="快速计算器"><svg class="size-4"><use href="#calc"/></svg></button></div>
    </div>
    <h2>实用工具<svg class="h-1 w-2"><use href="#caret"/></svg></h2>
  </section>
  <section class="w-[76px]">
    <div class="gap-3 pl-[9px]">
      <button class="flex w-8 flex-col items-center pt-px"><svg class="size-8"><use href="#Paste"/></svg><span class="mt-1">粘贴</span><svg class="mt-1 h-[3px] w-[5px]"><use href="#caret"/></svg></button>
      <div class="[&>button]:flex [&>button]:h-6 [&>button]:items-center"><button aria-label="剪切"><svg class="size-4"><use href="#cut"/></svg></button><button aria-label="复制剪裁"><svg class="size-4"><use href="#copyclip"/></svg></button></div>
    </div>
    <h2>剪贴板</h2>
  </section>
  <section class="w-[60px]">
    <div class="justify-center"><button class="flex w-8 flex-col items-center pt-px"><svg class="size-8"><use href="#Base"/></svg><span class="mt-1">基点</span><svg class="mt-1 h-[3px] w-[5px]"><use href="#caret"/></svg></button></div>
    <h2>视图<svg class="h-1 w-2"><use href="#caret"/></svg><svg class="size-2"><use href="#corner"/></svg></h2>
  </section>
</main>

<!-- Docked drawing toolbar -->
<div class="flex h-[30px] shrink-0 items-start border-t border-[#888] bg-[#5c5c5c] pt-px pl-px">
  <div class="flex h-6 items-center gap-[7px] border border-[#3c3c3c] bg-[#595959] pr-2 pl-[3px] [&_svg]:block">
    <i class="h-3 w-1 border-x border-dotted border-[#222]"></i>
    <button aria-label="直线" class="ml-[-3px]"><svg class="size-4"><use href="#line"/></svg></button><button aria-label="构造线"><svg class="size-4"><use href="#xline"/></svg></button><button aria-label="多段线"><svg class="size-4"><use href="#pline"/></svg></button><button aria-label="多边形"><svg class="size-4"><use href="#poly"/></svg></button><button aria-label="矩形"><svg class="size-4"><use href="#rect"/></svg></button><button aria-label="圆弧"><svg class="size-4"><use href="#arc"/></svg></button><button aria-label="圆"><svg class="size-4"><use href="#circle"/></svg></button><button aria-label="修订云线"><svg class="size-4"><use href="#cloud"/></svg></button><button aria-label="样条曲线"><svg class="size-4"><use href="#spline"/></svg></button><button aria-label="椭圆"><svg class="size-4"><use href="#ellipse"/></svg></button><button aria-label="椭圆弧"><svg class="size-4"><use href="#earc"/></svg></button><button aria-label="插入块"><svg class="size-4"><use href="#insblk"/></svg></button><button aria-label="创建块"><svg class="size-4"><use href="#block"/></svg></button><button aria-label="点"><svg class="size-4"><use href="#ray"/></svg></button><button aria-label="图案填充"><svg class="size-4"><use href="#hatchi"/></svg></button>
  </div>
</div>

<!-- Drawing area -->
<div class="relative min-h-0 flex-1 overflow-hidden border-r border-black bg-[#212830]">
  <!-- One tile holds four major cells, so that every line sits on a whole pixel -->
  <svg class="absolute inset-0 h-full w-full" fill="none" shape-rendering="crispEdges" aria-hidden="true">
    <pattern id="grid" x="83" y="15" width="389" height="389" patternUnits="userSpaceOnUse">
      <path stroke="#292e3b" d="M19.500 0V389M39.500 0V389M58.500 0V389M78.500 0V389M117.500 0V389M136.500 0V389M156.500 0V389M175.500 0V389M214.500 0V389M233.500 0V389M253.500 0V389M272.500 0V389M311.500 0V389M331.500 0V389M350.500 0V389M370.500 0V389M0 19.500H389M0 39.500H389M0 58.500H389M0 78.500H389M0 117.500H389M0 136.500H389M0 156.500H389M0 175.500H389M0 214.500H389M0 233.500H389M0 253.500H389M0 272.500H389M0 311.500H389M0 331.500H389M0 350.500H389M0 370.500H389"/>
      <path stroke="#31374f" d="M.5 0V389M97.500 0V389M195.500 0V389M292.500 0V389M0 .5H389M0 97.500H389M0 195.500H389M0 292.500H389"/>
    </pattern>
    <rect width="100%" height="100%" fill="url(#grid)"/>
  </svg>
  <p class="absolute top-[7px] left-[3px] text-[#d0d0d0]">[−][俯视][二维线框]</p>
  <svg class="absolute top-0 left-[775px] h-[93px] w-[97px]" viewBox="0 0 97 93" fill="none" stroke="#fff" shape-rendering="crispEdges"><path d="M0 44.500H41M56 44.500H97M48.500 0V37M48.500 52V93"/><rect x="41.500" y="37.500" width="14" height="14"/></svg>
  <svg class="absolute bottom-[15px] left-4 h-[76px] w-[76px]" viewBox="0 0 76 76" fill="none" stroke="#fff"><path d="M5.500 20V69.500H55M1.500 64.500H10.500V73.500H1.500Z"/><path d="M7 1L13.500 8L20 1M13.500 8V15M60 55L73 68M73 55L60 68"/></svg>

  <!-- View cube -->
  <svg class="absolute top-2 right-6 h-[150px] w-[132px]" viewBox="0 0 132 150" text-anchor="middle">
    <circle cx="66" cy="75" r="54" fill="none" stroke="#484c54" stroke-width="13"/>
    <rect x="40.500" y="48.500" width="52" height="52" fill="#b0b2b5" stroke="#7c7f83"/><rect x="50" y="58" width="33" height="33" fill="#a0a5ab"/>
    <text x="66" y="85" font-size="30" fill="#62676f">上</text>
    <g font-size="19" font-weight="700" fill="#a3a5a6"><text x="66" y="26">北</text><text x="66" y="140">南</text><text x="10" y="82">西</text><text x="123" y="82">东</text></g>
  </svg>
  <button class="absolute top-[170px] right-[65px] flex h-[18px] w-12 items-center justify-between rounded border border-[#b0b2bf] bg-[#9193a2] px-1 font-['Liberation_Sans',sans-serif] text-[10px] text-[#555866]">WCS<svg class="h-1 w-2 text-[#b9bbc8]"><use href="#caret"/></svg></button>

  <!-- Navigation bar -->
  <div class="absolute top-[212px] right-[10px] w-[33px] rounded bg-[#595d62] shadow">
    <svg class="h-[213px] w-[33px]" viewBox="0 0 33 213" fill="none" stroke="#3c4047"><circle cx="27" cy="5" r="3.500"/><path d="M25 3L29 7M29 3L25 7"/><path d="M17 19H28V31A11 11 0 1 1 17 19Z"/><circle cx="17" cy="30" r="6"/><path d="M12 34L8 38M21 34L26 38"/><path d="M14 49H20L17 52ZM14 119H20L17 122ZM14 158H20L17 161Z" fill="#3c4047"/><path d="M12 83Q7 77 5 71Q7 69 10 73L9 63Q11 61 12 64L14 71V62Q16 60 17 62V71L20 63Q22 62 22 64L21 73L25 67Q28 67 26 71Q25 80 20 83Z"/><path d="M5 90L20 104M20 90L5 104M5 94V90H9M16 90H20V94M5 100V104H9"/><circle cx="21" cy="105" r="5.500"/><path d="M25 109L29 112" stroke-width="3"/><ellipse cx="17" cy="141" rx="11" ry="5"/><path d="M14 149V134H12L16 128L20 134H18V149ZM12 139V147L7 143Z" fill="#3c4047" fill-opacity=".5"/><path d="M4 165H30" stroke="#6b6f74"/><path d="M4.500 170.500H10.500V176.500H4.500ZM13.500 170.500H19.500V176.500H13.500ZM21.500 170.500H27.500V176.500H21.500ZM4.500 179.500H21.500V192.500H4.500Z"/><path d="M10 182V190L17 186Z" fill="#3c4047"/><circle cx="27" cy="207" r="3.500"/><path d="M25 207H29"/></svg>
  </div>
  <div class="absolute inset-y-0 right-0 w-[7px] border-r border-[#1bd0ea] bg-[#b9cdea]"></div>
  <div class="absolute top-[51px] right-px flex h-[58px] w-[9px] items-end rounded border border-[#c8d0dc] bg-[#2b2f36]"><i class="h-6 w-full bg-[repeating-linear-gradient(0deg,#2fd55b_0px,#2fd55b_2px,#1c5a30_2px,#1c5a30_3px)]"></i></div>

  <!-- Command line -->
  <div class="absolute right-[360px] bottom-0 left-[636px] flex h-[27px] rounded-t border border-[#55585c] bg-[#bfc0c3]">
    <div class="flex w-[53px] shrink-0 items-center gap-2 bg-linear-to-b from-[#6c6c6c] to-[#3d3d3d] pl-[2px]"><i class="h-5 w-[3px] border-x border-dotted border-[#999]"></i>
      <button aria-label="关闭命令行"><svg class="size-3" viewBox="0 0 12 12"><path d="M2 2L10 10M10 2L2 10" stroke="#ddd" stroke-width="2"/></svg></button>
      <button aria-label="自定义命令行"><svg class="size-4" viewBox="0 0 16 16"><path d="M6 6L13 14" stroke="#ddd" stroke-width="3"/><path d="M2 3L5 6L7 4L4 1Q8 0 9 4T5 9T1 5Z" fill="#ddd"/></svg></button></div>
    <label class="flex flex-1 items-center gap-1 px-1 pb-[3px]">
      <svg class="size-4 shrink-0" viewBox="0 0 16 16"><rect x=".5" y=".5" width="15" height="15" rx="1" fill="#a9adb5" stroke="#666c78"/><path d="M3 4L7 8L3 12M8 12H12" stroke="#333a48" fill="none"/></svg><svg class="h-[3px] w-[6px] shrink-0 text-[#555]"><use href="#caret"/></svg>
      <input aria-label="命令" placeholder="键入命令" class="ml-[2px] w-full bg-transparent text-black outline-none placeholder:text-[#7b7b7b] placeholder:italic">
      <svg class="h-1 w-2 shrink-0 rotate-180 text-black"><use href="#caret"/></svg>
    </label>
  </div>
</div>

<!-- Layout tabs and status bar -->
<footer class="flex h-7 shrink-0 items-start justify-between bg-[#3a3a3a]">
  <div class="flex pl-[10px] [&>button]:h-[18px] [&>button]:bg-linear-to-b [&>button]:pt-px [&>button]:[clip-path:polygon(0_0,100%_0,88%_85%,82%_100%,18%_100%,12%_85%)]">
    <button class="w-[50px] from-[#6c6c6c] to-[#858585] font-bold text-white">模型</button><button class="w-[53px] from-[#505050] to-[#666] text-[#bbb]">布局1</button><button class="w-[54px] from-[#505050] to-[#666] text-[#bbb]">布局2</button><button aria-label="新建布局" class="ml-[3px] w-6 from-[#505050] to-[#5c5c5c] text-base leading-4 font-bold text-[#ccc]">+</button>
  </div>
  <div class="flex h-[27px] border-t border-[#888] bg-[#535353] text-[#ccc] [&>div]:flex [&>div]:items-center [&>div]:border-r [&>div]:border-[#888] [&_button]:flex [&_button]:h-full [&_button]:items-center [&_button]:justify-center">
    <div class="w-[184px] justify-center border-l text-[#b4b4b4]">2401.6604, 2424.2068, 0.0000</div>
    <div class="w-[30px] text-white"><button class="w-full font-bold">模型</button></div>
    <div class="w-[65px] pl-[5px]"><button aria-label="栅格"><svg class="size-4"><use href="#sgrid"/></svg></button><button aria-label="捕捉" class="ml-2 gap-2 text-white"><svg class="size-4"><use href="#sdots"/></svg><svg class="h-[5px] w-[7px]"><use href="#caret"/></svg></button></div>
    <div class="w-[27px]"><button aria-label="推断约束" class="w-full"><svg class="size-4"><use href="#sinfer"/></svg></button></div>
    <div class="w-[24px]"><button aria-label="动态输入" class="w-full"><svg class="size-4"><use href="#sdyn"/></svg></button></div>
    <div class="w-[103px] gap-2 pl-[5px] text-white"><button aria-label="正交"><svg class="size-4"><use href="#sortho"/></svg></button><button aria-label="极轴追踪" class="gap-2"><svg class="size-4"><use href="#spolar"/></svg><svg class="h-[5px] w-[7px]"><use href="#caret"/></svg></button><button aria-label="等轴测" class="gap-2"><svg class="size-4"><use href="#siso"/></svg><svg class="h-[5px] w-[7px]"><use href="#caret"/></svg></button></div>
    <div class="w-[64px] gap-[9px] pl-[5px] text-white"><button aria-label="对象捕捉追踪"><svg class="size-4"><use href="#strack"/></svg></button><button aria-label="对象捕捉" class="gap-2"><svg class="size-4"><use href="#sosnap"/></svg><svg class="h-[5px] w-[7px]"><use href="#caret"/></svg></button></div>
    <div class="w-[25px]"><button aria-label="线宽" class="w-full"><svg class="size-4"><use href="#slw"/></svg></button></div>
    <div class="w-[25px]"><button aria-label="透明度" class="w-full"><svg class="size-4"><use href="#strans"/></svg></button></div>
    <div class="w-[25px]"><button aria-label="选择循环" class="w-full"><svg class="size-4"><use href="#scyc"/></svg></button></div>
    <div class="w-[41px] text-white"><button aria-label="三维对象捕捉" class="w-full gap-2"><svg class="size-4"><use href="#s3d"/></svg><svg class="h-[5px] w-[7px]"><use href="#caret"/></svg></button></div>
    <div class="w-[105px] gap-2 pl-[5px] text-white"><button aria-label="动态 UCS"><svg class="size-4"><use href="#sucs"/></svg></button><button aria-label="过滤对象选择" class="gap-2"><svg class="size-4"><use href="#scube"/></svg><svg class="h-[5px] w-[7px]"><use href="#caret"/></svg></button><button aria-label="小控件" class="gap-2"><svg class="size-4"><use href="#sgiz"/></svg><svg class="h-[5px] w-[7px]"><use href="#caret"/></svg></button></div>
    <div class="w-[112px] gap-2 pl-[6px]"><button aria-label="注释可见性" class="text-[#1e90ff]"><svg class="size-4"><use href="#sannv"/></svg></button><button aria-label="自动缩放"><svg class="size-4"><use href="#sanna"/></svg></button><button aria-label="注释比例"><svg class="size-4"><use href="#sann"/></svg></button><button class="gap-[5px] text-white">1:1<svg class="h-[5px] w-[7px]"><use href="#caret"/></svg></button></div>
    <div class="w-[41px]"><button aria-label="切换工作空间" class="w-full gap-3 pl-1"><svg class="size-[14px]"><use href="#gear"/></svg><svg class="h-[5px] w-[7px] text-white"><use href="#caret"/></svg></button></div>
    <div class="w-[27px]"><button aria-label="注释监视器" class="w-full"><svg class="size-4"><use href="#splus"/></svg></button></div>
    <div class="w-[98px] pr-1 pl-[5px] text-white"><svg class="size-4 shrink-0"><use href="#sruler"/></svg><select aria-label="单位" class="w-full appearance-none bg-transparent pl-[9px] font-medium outline-none"><option>小数</option></select><svg class="h-[5px] w-[7px] shrink-0"><use href="#caret"/></svg></div>
    <div class="w-[25px]"><button aria-label="快捷特性" class="w-full"><svg class="size-4"><use href="#sqp"/></svg></button></div>
    <div class="w-[42px]"><button aria-label="锁定用户界面" class="w-full gap-3"><svg class="size-4"><use href="#slock"/></svg><svg class="h-[5px] w-[7px] text-white"><use href="#caret"/></svg></button></div>
    <div class="w-[26px]"><button aria-label="隔离对象" class="w-full"><svg class="size-4"><use href="#sisol"/></svg></button></div>
    <div class="w-[27px]"><button aria-label="硬件加速" class="w-full"><svg class="size-4"><use href="#sperf"/></svg></button></div>
    <div class="w-[52px] justify-around"><button aria-label="全屏显示"><svg class="size-4"><use href="#sfull"/></svg></button><button aria-label="自定义"><svg class="size-4"><use href="#smenu"/></svg></button></div>
  </div>
</footer>
<div class="h-[2px] shrink-0 border-t border-black bg-[#b8b8b8]"></div>

<!-- Tools menu -->
<ul class="absolute top-[46px] left-[358px] w-[246px] border border-[#a0a0a0] bg-[#f0f0f0] bg-[linear-gradient(90deg,transparent_29px,#dcdcdc_29px,#dcdcdc_30px,#fff_30px,#fff_31px,transparent_31px)] px-[2px] pt-px pb-[2px] text-black [&_button]:flex [&_button]:h-[22px] [&_button]:w-full [&_button]:items-center [&_button]:pr-[9px] [&_button]:text-left [&_hr]:mt-[4px] [&_hr]:mb-[3px] [&_hr]:ml-7 [&_hr]:border-[#d8d8d8] [&_span]:flex-1 [&_svg:first-child]:mr-[13px] [&_svg:first-child]:ml-[3px] [&_svg:first-child]:size-4 [&_svg:first-child]:shrink-0 [&_svg:last-child]:h-2 [&_svg:last-child]:w-1">
  <li><button><svg></svg><span>工作空间(O)</span><svg><use href="#arrow"/></svg></button></li>
  <li><button><svg></svg><span>选项板</span><svg><use href="#arrow"/></svg></button></li>
  <li><button><svg></svg><span>工具栏</span><svg><use href="#arrow"/></svg></button></li>
  <li><button><svg class="rounded-xs bg-white outline-3 outline-[#d5e8fa]"><use href="#mcmd"/></svg><span>命令行</span><kbd class="pr-[10px] font-[inherit]">Ctrl+9</kbd></button></li>
  <li><button><svg></svg><span>全屏显示</span><kbd class="pr-[10px] font-[inherit]">Ctrl+0</kbd></button></li>
  <li><hr></li>
  <li><button><svg><use href="#mspell"/></svg><span>拼写检查(E)</span></button></li>
  <li><button><svg><use href="#qsel"/></svg><span>快速选择(K)...</span></button></li>
  <li><button><svg></svg><span>绘图次序(D)</span><svg><use href="#arrow"/></svg></button></li>
  <li><button><svg></svg><span>隔离(I)</span><svg><use href="#arrow"/></svg></button></li>
  <li><button><svg></svg><span>查询(Q)</span><svg><use href="#arrow"/></svg></button></li>
  <li><button><svg><use href="#mfield"/></svg><span>更新字段(T)</span></button></li>
  <li><hr></li>
  <li><button><svg><use href="#mblk"/></svg><span>块编辑器(B)</span></button></li>
  <li><button><svg></svg><span>外部参照和块在位编辑</span><svg><use href="#arrow"/></svg></button></li>
  <li><button><svg><use href="#mdata"/></svg><span>数据提取(X)...</span></button></li>
  <li><button><svg></svg><span>数据链接</span><svg><use href="#arrow"/></svg></button></li>
  <li><hr></li>
  <li><button><svg></svg><span>动作录制器(T)</span><svg><use href="#arrow"/></svg></button></li>
  <li><button><svg><use href="#mapp"/></svg><span>加载应用程序(L)...</span></button></li>
  <li><button><svg><use href="#mscript"/></svg><span>运行脚本(R)...</span></button></li>
  <li><button><svg></svg><span>宏(A)</span><svg><use href="#arrow"/></svg></button></li>
  <li><button><svg></svg><span>AutoLISP(I)</span><svg><use href="#arrow"/></svg></button></li>
  <li><hr></li>
  <li><button><svg></svg><span>显示图像(Y)</span><svg><use href="#arrow"/></svg></button></li>
  <li><hr></li>
  <li><button><svg></svg><span>新建 UCS(W)</span><svg><use href="#arrow"/></svg></button></li>
  <li><button><svg><use href="#mucs"/></svg><span>命名 UCS(U)...</span></button></li>
  <li><hr></li>
  <li><button><svg><use href="#mgeo"/></svg><span>地理位置(L)...</span></button></li>
  <li><hr></li>
  <li><button><svg></svg><span>CAD 标准(S)</span><svg><use href="#arrow"/></svg></button></li>
  <li><button><svg></svg><span>向导(Z)</span><svg><use href="#arrow"/></svg></button></li>
  <li><button><svg><use href="#mdraft"/></svg><span>绘图设置(F)...</span></button></li>
  <li><button><svg><use href="#mgrp"/></svg><span>组(G)</span></button></li>
  <li><button><svg><use href="#mungrp"/></svg><span>解除编组(U)</span></button></li>
  <li><button><svg></svg><span>数字化仪(B)</span><svg><use href="#arrow"/></svg></button></li>
  <li><button aria-expanded="true" class="rounded-xs bg-[#e8edf5] outline -outline-offset-1 outline-[#aecff7]"><svg></svg><span>自定义(C)</span><svg><use href="#arrow"/></svg></button></li>
  <li><button><svg><use href="#mopt"/></svg><span>选项(N)...</span></button></li>
</ul>

<!-- Customize submenu -->
<ul class="absolute top-[761px] left-[598px] w-[230px] border border-[#a0a0a0] bg-[#f0f0f0] bg-[linear-gradient(90deg,transparent_29px,#dcdcdc_29px,#dcdcdc_30px,#fff_30px,#fff_31px,transparent_31px)] p-[2px] text-black [&_button]:flex [&_button]:h-[22px] [&_button]:w-full [&_button]:items-center [&_button]:text-left [&_hr]:mt-[4px] [&_hr]:mb-[3px] [&_hr]:ml-7 [&_hr]:border-[#d8d8d8] [&_svg]:mr-[13px] [&_svg]:ml-[3px] [&_svg]:size-4">
  <li><button class="rounded-xs bg-[#e8edf5] outline -outline-offset-1 outline-[#aecff7]"><svg><use href="#mcui"/></svg>界面(I)...</button></li>
  <li><button><svg><use href="#mpal"/></svg>工具选项板(P)...</button></li>
  <li><hr></li>
  <li><button><svg><use href="#mcuiin"/></svg>输入自定义设置...</button></li>
  <li><button><svg><use href="#mcuiout"/></svg>输出自定义设置...</button></li>
  <li><hr></li>
  <li><button><svg><use href="#mpgp"/></svg>编辑程序参数 (acad.pgp)(P)</button></li>
</ul>

<!-- Tutorial annotations -->
<svg class="pointer-events-none absolute top-0 left-0 h-[800px] w-[840px]" viewBox="0 0 840 800" fill="none" stroke="#ff2317">
  <rect x="353" y="22" width="72" height="27" rx="2" stroke-width="4"/>
  <rect x="355.500" y="761.500" width="225" height="28" rx="2" stroke-width="3"/>
  <rect x="597.500" y="757.500" width="235" height="34" rx="2" stroke-width="3"/>
  <path d="M398.500 68H400L492.700 734L497 732L491.700 749L480 735L484.700 737Z" fill="#ff2317" stroke="none"/>
</svg>
<p class="pointer-events-none absolute right-[7px] bottom-[22px] font-['Noto_Sans_CJK_SC',sans-serif] text-4xl font-black text-[#808080]">最需教育</p>
</body>
</html>
